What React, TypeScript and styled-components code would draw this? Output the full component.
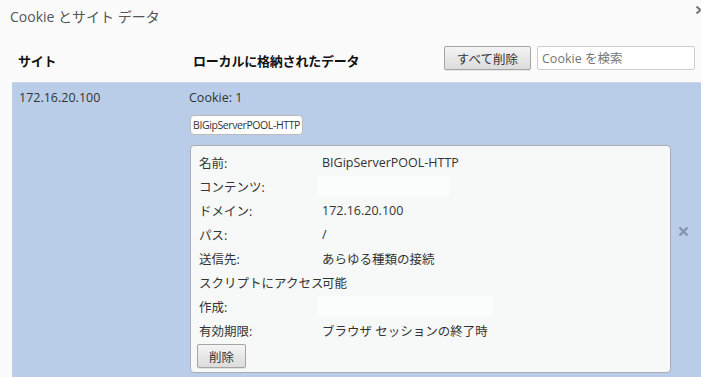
import { FC } from "react";
import styled, { createGlobalStyle } from "styled-components";

const GlobalStyle = createGlobalStyle`
  html, body {
    margin: 0;
    padding: 0;
    background: #fbfbfb;
  }
  body {
    font-family: "Open Sans", "Noto Sans CJK JP", sans-serif;
    font-size: 12.5px;
    color: #333;
  }
`;

const Dialog = styled.div({
  position: "relative",
  width: 701,
  height: 377,
  overflow: "hidden",
  background: "#fbfbfb",
});

const Title = styled.div({
  padding: "6px 10px 0",
  height: 28,
  fontSize: 14,
  color: "#555",
  lineHeight: "22px",
});

const CloseMark = styled.svg({
  position: "absolute",
  top: 6,
  right: 0,
});

const HeaderRow = styled.div({
  display: "flex",
  alignItems: "center",
  height: 48,
  paddingLeft: 18,
  paddingRight: 6,
});

const HeaderCell = styled.div<{ $width?: number }>(({ $width }) => ({
  width: $width,
  flex: $width ? "none" : 1,
  fontWeight: 700,
  fontSize: 13,
  color: "#111",
  paddingTop: 4,
  letterSpacing: -0.2,
}));

const Button = styled.button({
  fontFamily: "inherit",
  fontSize: 12.5,
  color: "#333",
  height: 24,
  padding: "0 12px",
  border: "1px solid #a5a5a5",
  borderRadius: 2,
  background: "linear-gradient(#f4f4f4, #dcdcdc)",
  boxShadow: "0 1px 0 rgba(0,0,0,0.08)",
});

const Search = styled.input({
  marginLeft: 6,
  width: 158,
  height: 24,
  boxSizing: "border-box",
  border: "1px solid #cdcdcd",
  borderRadius: 2,
  padding: "0 4px",
  fontFamily: "inherit",
  fontSize: 12.5,
  background: "#fff",
  "::placeholder": { color: "#aaa" },
});

const SiteRow = styled.div({
  position: "relative",
  marginLeft: 12,
  background: "#b9cde9",
  borderTop: "1px dotted #d8e2f0",
  display: "flex",
  paddingTop: 6,
  height: 300,
});

const SiteName = styled.div({
  width: 170,
  paddingLeft: 7,
  lineHeight: "18px",
});

const DataColumn = styled.div({
  display: "flex",
  flexDirection: "column",
  alignItems: "flex-start",
  width: 482,
});

const CookieCount = styled.div({
  lineHeight: "18px",
});

const Chip = styled.div({
  marginTop: 8,
  marginLeft: 1,
  fontSize: 10.5,
  height: 18,
  lineHeight: "18px",
  padding: "0 2px",
  background: "#fff",
  border: "1px solid #bbb",
  borderRadius: 4,
  letterSpacing: -0.4,
});

const Card = styled.div({
  marginTop: 10,
  marginLeft: 1,
  width: 481,
  boxSizing: "border-box",
  background: "#f7f9f8",
  border: "1px solid #a9acb2",
  borderRadius: 4,
  padding: "4px 0 4px 6px",
});

const Field = styled.div({
  display: "grid",
  gridTemplateColumns: "125px 1fr",
  height: 24,
  alignItems: "center",
});

const Label = styled.div({
  whiteSpace: "nowrap",
  paddingLeft: 2,
});

const Value = styled.div({
  whiteSpace: "nowrap",
});

const BlankValue = styled.div<{ $width: number }>(({ $width }) => ({
  width: $width,
  height: 20,
  marginLeft: -5,
  background: "#fbfcfc",
}));

const DeleteButton = styled(Button)({
  marginTop: 2,
  padding: "0 11px",
});

const RemoveMark = styled.svg({
  position: "absolute",
  right: 12,
  top: 143,
});

const fields: { label: string; value?: string; blank?: number }[] = [
  { label: "名前:", value: "BIGipServerPOOL-HTTP" },
  { label: "コンテンツ:", blank: 132 },
  { label: "ドメイン:", value: "172.16.20.100" },
  { label: "パス:", value: "/" },
  { label: "送信先:", value: "あらゆる種類の接続" },
  { label: "スクリプトにアクセス", value: "可能" },
  { label: "作成:", blank: 176 },
  { label: "有効期限:", value: "ブラウザ セッションの終了時" },
];

const App: FC = () => (
  <>
    <GlobalStyle />
    <Dialog>
      <Title>Cookie とサイト データ</Title>
      <CloseMark width="5" height="8" viewBox="0 0 5 8">
        <path d="M0.5 0.5 L4.5 4 M0.5 7.5 L4.5 4" stroke="#777" strokeWidth="2" />
      </CloseMark>
      <HeaderRow>
        <HeaderCell $width={175}>サイト</HeaderCell>
        <HeaderCell>ローカルに格納されたデータ</HeaderCell>
        <Button>すべて削除</Button>
        <Search placeholder="Cookie を検索" />
      </HeaderRow>
      <SiteRow>
        <SiteName>172.16.20.100</SiteName>
        <DataColumn>
          <CookieCount>Cookie: 1</CookieCount>
          <Chip>BIGipServerPOOL-HTTP</Chip>
          <Card>
            {fields.map((f) => (
              <Field key={f.label}>
                <Label>{f.label}</Label>
                {f.blank ? <BlankValue $width={f.blank} /> : <Value>{f.value}</Value>}
              </Field>
            ))}
            <DeleteButton>削除</DeleteButton>
          </Card>
        </DataColumn>
        <RemoveMark width="11" height="11" viewBox="0 0 11 11">
          <path d="M1.5 1.5 L9.5 9.5 M9.5 1.5 L1.5 9.5" stroke="#8594a8" strokeWidth="2.4" />
        </RemoveMark>
      </SiteRow>
    </Dialog>
  </>
);

export default App;
